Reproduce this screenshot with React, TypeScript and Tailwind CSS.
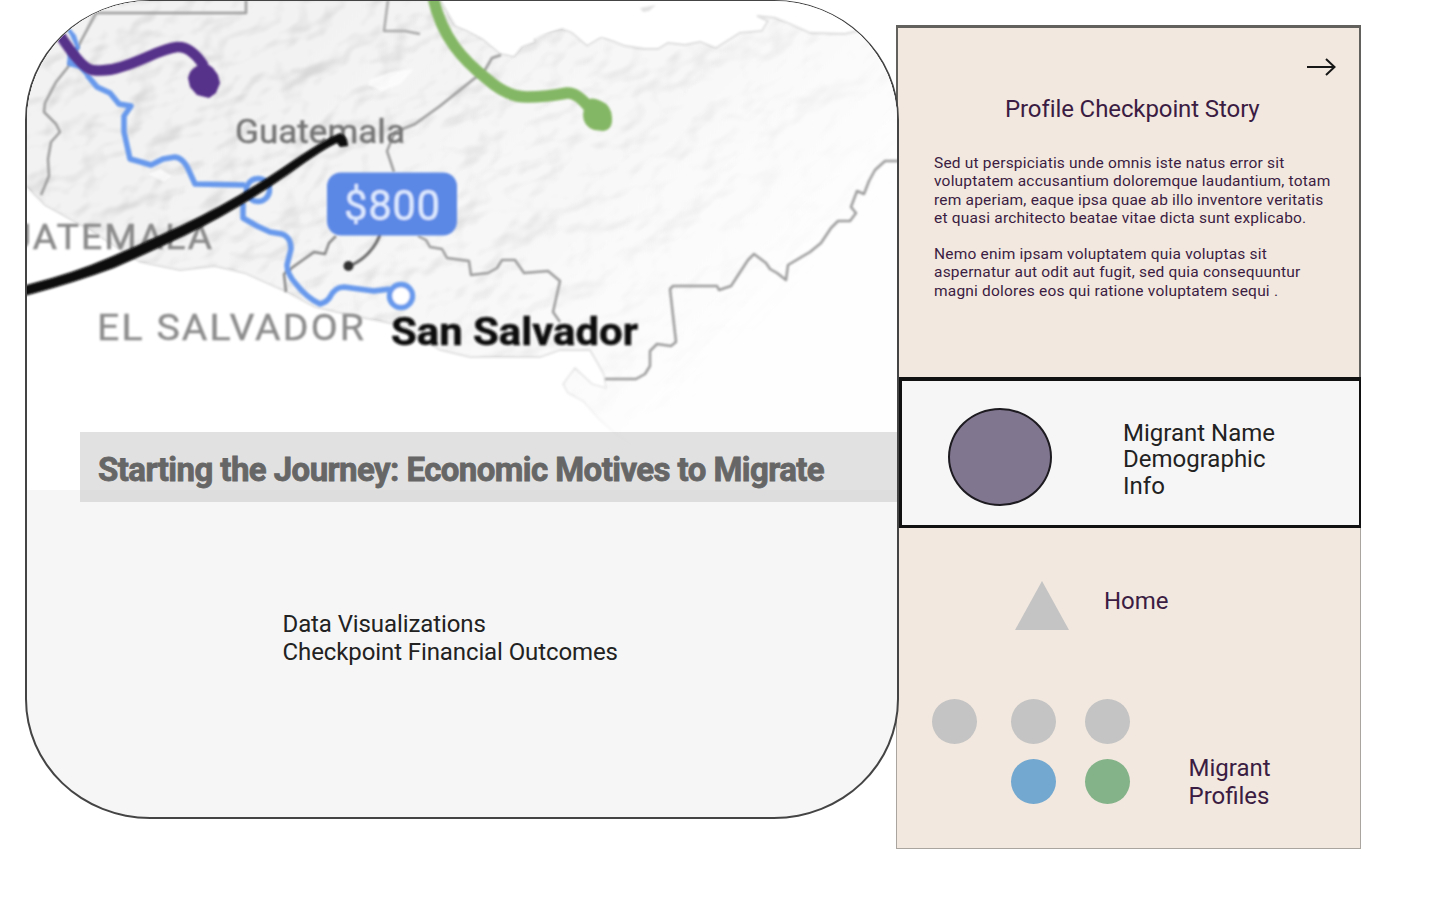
const LAND =
  "M20 0 H440 L455 26 L467 31 L482 39 L500 54 L514 57 L522 47 L535 42 L533 35 L562 29 L572 33 L587 46 L602 37 L625 46 L645 49 L658 49 L668 43 L685 45 L700 42 L716 48 L740 33 L762 31 L768 21 L757 16 L775 18 L790 24 L810 33 L845 34 L862 30 L905 30 V495 H700 L650 458 L618 436 L600 420 L583 401 L568 393 L563 384 L575 368 L592 384 L606 388 L604 375 L597 362 L590 350 L560 350 L540 357 L470 357 L440 350 L400 325 L350 315 L315 307 L285 291 L245 273 L215 266 L180 270 L140 262 L90 230 L45 205 L20 180 Z";

function RegionMap() {
  return (
    <svg
      className="block h-[489px] w-full shrink-0"
      viewBox="27 1 870 489"
      preserveAspectRatio="none"
      fontFamily="Roboto, sans-serif"
    >
      <defs>
        <linearGradient id="land" gradientUnits="userSpaceOnUse" x1="260" y1="60" x2="640" y2="430">
          <stop offset="0" stopColor="#f0f0f0" />
          <stop offset="0.5" stopColor="#f6f6f6" />
          <stop offset="1" stopColor="#fefefe" />
        </linearGradient>
        <linearGradient id="coast" gradientUnits="userSpaceOnUse" x1="0" y1="20" x2="0" y2="450">
          <stop offset="0" stopColor="#dcdcdc" />
          <stop offset="0.75" stopColor="#dcdcdc" />
          <stop offset="1" stopColor="#dcdcdc" stopOpacity="0" />
        </linearGradient>
        <linearGradient id="fade" gradientUnits="userSpaceOnUse" x1="300" y1="80" x2="680" y2="430">
          <stop offset="0" stopColor="#fff" />
          <stop offset="0.6" stopColor="#999" />
          <stop offset="1" stopColor="#000" />
        </linearGradient>
        <mask id="reliefMask">
          <path d={LAND} fill="url(#fade)" />
        </mask>
        <filter id="relief" x="0" y="0" width="100%" height="100%" colorInterpolationFilters="sRGB">
          <feTurbulence type="fractalNoise" baseFrequency="0.024 0.034" numOctaves="3" seed="23" />
          <feColorMatrix values="0 0 0 0 0  0 0 0 0 0  0 0 0 0 0  1 0 0 0 0" />
          <feDiffuseLighting surfaceScale="9" diffuseConstant="1.15" lightingColor="#fff">
            <feDistantLight azimuth="235" elevation="60" />
          </feDiffuseLighting>
          <feGaussianBlur stdDeviation="0.8" />
        </filter>
        <filter id="soft" filterUnits="userSpaceOnUse" x="0" y="-20" width="920" height="530">
          <feGaussianBlur stdDeviation="0.9" />
        </filter>
      </defs>

      <path d={LAND} fill="url(#land)" stroke="url(#coast)" strokeWidth="1.8" filter="url(#soft)" />
      <g mask="url(#reliefMask)">
        <rect
          x="20"
          y="0"
          width="880"
          height="490"
          filter="url(#relief)"
          opacity="0.16"
          transform="rotate(-18 460 245) translate(-100 -150) scale(1.25)"
        />
      </g>
      <path d="M458 24 L468 1 H740 L735 26 L700 35 L650 42 L590 35 L565 25 L515 47 L490 39Z" fill="#fff" filter="url(#soft)" />
      <path d="M640 8 L656 5 L649 11 L643 12" fill="#e2e2e2" filter="url(#soft)" />
      <g fill="#fff" opacity="0.7" filter="url(#soft)">
        <path d="M370 80 L390 72 L414 69 L400 84 L382 91 L368 85Z" />
        <path d="M148 174 L160 169 L172 176 L164 182Z" />
      </g>

      <g fill="none" stroke="#9c9c9c" strokeWidth="2.5" strokeLinejoin="round" filter="url(#soft)">
        <path d="M96 13 H246 V0" />
        <path d="M96 13 L81 41 L68 67 L56 82 L45 103 L44 112 L56 124 L60 132 L51 142 L48 159 L49 176 L41 195" />
        <path d="M388 0 L384 31 L405 31 L420 34" stroke="#aaa" />
        <path d="M501 55 L492 58 L485 70 L440 106 L415 124 L395 132 L387 151 L394 172" />
        <path d="M336 236 L329 243 L325 254 L314 252 L293 267 L284 274 L286 292" stroke="#888" />
        <path d="M418 236 L426 240 L430 247 L442 249 L447 258 L469 261 L471 275 L488 273 L497 268 L502 260 L515 260 L524 273 L548 271 L560 281 L553 312 L560 322" />
        <path d="M605 379 H636 L645 374 L650 366 L650 351 L657 344 L671 346 L676 342 L670 289 L673 286 L717 286 L719 290 L731 286 L748 260 L754 254 L766 263 L770 269 L777 273 L786 280 L788 265 L810 252 L821 243 L831 228 L838 221 L850 221 L856 213 L851 207 L857 191 L864 194 L869 181 L875 170 L885 161 L900 161" />
      </g>

      <g filter="url(#soft)">
        <text x="235" y="143" textLength="170" lengthAdjust="spacingAndGlyphs" fontSize="34" fill="#757575" stroke="#757575" strokeWidth="0.5">
          Guatemala
        </text>
        <text x="7" y="249" textLength="207" lengthAdjust="spacingAndGlyphs" fontSize="35" letterSpacing="2" fill="#8a8a8a" stroke="#8a8a8a" strokeWidth="0.6">
          UATEMALA
        </text>
        <text x="97" y="340" textLength="269" lengthAdjust="spacingAndGlyphs" fontSize="37" letterSpacing="2" fill="#8c8c8c" stroke="#8c8c8c" strokeWidth="0.4">
          EL SALVADOR
        </text>
        <text x="391" y="345" textLength="247" lengthAdjust="spacingAndGlyphs" fontSize="39" fontWeight="700" fill="#111" stroke="#111" strokeWidth="0.5">
          San Salvador
        </text>
      </g>

      <g fill="none" stroke="#6799ec" strokeWidth="5.5" strokeLinejoin="round" filter="url(#soft)">
        <path d="M87 75 L97 87 L110 93 L119 104 L131 106 L124 116 L124 132 L130 159 L141 162 L151 165 L163 159 L175 157 Q184 158 190 173 L195 184 L245 185 M243 203 L243 218 L257 226 L270 232 L282 234 Q291 237 291 249 L287 265 Q287 274 296 284 Q307 298 320 304 Q327 302 330 297 Q335 287 344 287 L374 291 L390 289" />
        <circle cx="258" cy="190" r="11.5" />
        <circle cx="401" cy="296" r="11.5" fill="#fff" />
        <path d="M67 28 L74 36 L78 48 L70 52 L69 64 L80 67 L88 76" fill="#6799ec" strokeWidth="4" />
      </g>
      <g filter="url(#soft)">
        <path d="M58 32 Q81 68 92 70 Q106 72 121 67 C147 59 160 49 177 47 Q191 46 204 66" fill="none" stroke="#57308a" strokeWidth="10.5" />
        <path d="M197 66 L205 62 L213 68 L218 75 L220 83 L216 93 L209 98 L197 95 L190 87 L188 78 Q190 69 197 66Z" fill="#57308a" />
        <path d="M433 -3 C442 38 463 60 487 79 Q507 97 527 97 Q546 97 567 93 Q576 92 588 106" fill="none" stroke="#84b765" strokeWidth="11.5" strokeLinecap="round" />
        <path d="M585 101 Q592 96 601 101 Q611 105 612 117 Q613 130 603 131 L594 130 Q583 126 583 115Z" fill="#84b765" />
      </g>
      <path
        d="M20 287 L30 284 Q76 272 108 258 Q144 243 180 226 Q232 202 282 168 Q326 138 340 133 Q348 136 348 146 L340 147 L337 143 Q322 150 289 174 Q236 211 184 236 Q146 254 114 268 Q76 282 32 294 L20 297Z"
        fill="#070707"
        filter="url(#soft)"
      />
      <g filter="url(#soft)">
        <path d="M380 235 Q372 255 352 265" fill="none" stroke="#696969" strokeWidth="3" />
        <circle cx="348.500" cy="266" r="5" fill="#333" />
        <rect x="327" y="172.500" width="130" height="63" rx="14" fill="#5b88e5" />
        <text x="344" y="220" textLength="96" lengthAdjust="spacing" fontSize="42" fill="#e0ebff">
          $800
        </text>
      </g>
    </svg>
  );
}

function Dot({ color }: { color: string }) {
  return <span className={`size-[45px] rounded-full ${color}`} />;
}

export default function App() {
  return (
    <div className="flex h-[900px] w-[1445px] overflow-hidden bg-white pl-[25px] font-['Roboto',sans-serif] text-[24px] leading-[28px] text-[#222]">
      <main className="relative z-10 flex h-[819px] w-[874px] shrink-0 flex-col overflow-hidden rounded-[125px/120px] border-2 border-t border-[#444] bg-[#f6f6f6]">
        <div className="h-[489px] bg-white">
          <RegionMap />
        </div>
        <h1 className="absolute top-[431px] right-0 left-[53px] flex h-[70px] items-center bg-[#c4c4c4]/50 pt-[5px] pl-[18px] text-[33px] font-bold tracking-[-0.57px] whitespace-nowrap text-[#666] [-webkit-text-stroke:0.8px_#666]">
          Starting the Journey: Economic Motives to Migrate
        </h1>
        <p className="pt-[120px] pl-[255.500px] tracking-[-0.1px]">
          Data Visualizations
          <br />
          Checkpoint Financial Outcomes
        </p>
      </main>

      <aside className="mt-[25px] -ml-[3px] flex h-[824px] w-[465px] shrink-0 flex-col border border-[#aaa59f] bg-[#f2e8df] text-[#3b1c42]">
        <section className="-mx-px -mt-px flex h-[352px] flex-col border-2 border-t-[3px] border-b-0 border-[#62615e] pl-[36px]">
          <svg className="mt-[29px] mr-[23px] h-[20px] w-[30px] self-end" viewBox="0 0 30 20" fill="none" stroke="#171717" strokeWidth="2">
            <path d="M1 10 H28 M20 2 L28.500 10 L20 18" />
          </svg>
          <h2 className="mt-[18px] pl-[71px] tracking-[-0.1px]">Profile Checkpoint Story</h2>
          <div className="mt-[31px] space-y-[18px] text-[15.500px] leading-[18.300px] tracking-[0.2px] whitespace-nowrap">
            <p>
              Sed ut perspiciatis unde omnis iste natus error sit
              <br />
              voluptatem accusantium doloremque laudantium, totam
              <br />
              rem aperiam, eaque ipsa quae ab illo inventore veritatis
              <br />
              et quasi architecto beatae vitae dicta sunt explicabo.
            </p>
            <p>
              Nemo enim ipsam voluptatem quia voluptas sit
              <br />
              aspernatur aut odit aut fugit, sed quia consequuntur
              <br />
              magni dolores eos qui ratione voluptatem sequi .
            </p>
          </div>
        </section>

        <section className="-mr-px ml-[1px] flex h-[151px] shrink-0 border-t-[4px] border-r-2 border-b-[3px] border-l-4 border-[#111] bg-[#f6f6f6] text-[#222]">
          <span className="mt-[27px] ml-[46px] h-[98px] w-[104px] shrink-0 rounded-[50%] border-2 border-[#1d1a20] bg-[#817690]" />
          <p className="mt-[40px] ml-[71px]">
            <span className="block leading-[25px]">Migrant Name</span>
            <span className="block leading-[26px]">Demographic</span>
            <span className="block leading-[28px]">Info</span>
          </p>
        </section>

        <section>
          <div className="flex pt-[53px] pl-[117px]">
            <svg className="h-[49px] w-[56px]" viewBox="0 0 56 49" fill="#c4c4c4">
              <path d="M28 0 L55 49 H1Z" />
            </svg>
            <span className="mt-[6px] ml-[34px]">Home</span>
          </div>
          <div className="mt-[69px] flex pl-[34.500px]">
            <div className="grid grid-cols-[79px_74px_45px] gap-y-[15px] self-start">
              <Dot color="bg-[#c4c4c4]" />
              <Dot color="bg-[#c4c4c4]" />
              <Dot color="bg-[#c4c4c4]" />
              <span />
              <Dot color="bg-[#73a8d0]" />
              <Dot color="bg-[#84b389]" />
            </div>
            <p className="mt-[55px] ml-[59px]">
              Migrant
              <br />
              Profiles
            </p>
          </div>
        </section>
      </aside>
    </div>
  );
}
